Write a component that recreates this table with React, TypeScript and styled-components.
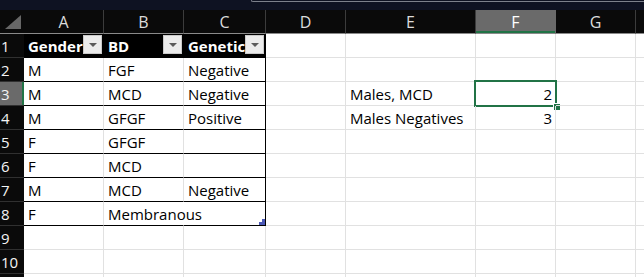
import styled, { createGlobalStyle } from "styled-components";

const GlobalStyle = createGlobalStyle`
  html, body {
    margin: 0;
    padding: 0;
    background: #ffffff;
    overflow: hidden;
  }
  body {
    font-family: "Open Sans", "Liberation Sans", sans-serif;
  }
`;

const GRID = "#e1e1e1";
const INK = "#000000";
const ACCENT = "#217346";

// last column and last row only peek in at the window edge, so no labels
const columns = ["A", "B", "C", "D", "E", "F", "G", ""];

// Table A1:C8
const tableHead = ["Gender", "BD", "Genetic"];
const tableRows = [
  ["M", "FGF", "Negative"],
  ["M", "MCD", "Negative"],
  ["M", "GFGF", "Positive"],
  ["F", "GFGF", ""],
  ["F", "MCD", ""],
  ["M", "MCD", "Negative"],
  ["F", "Membranous", ""],
];

// Loose values outside the table, keyed by row then column index
const extras: Record<number, Record<number, string>> = {
  3: { 4: "Males, MCD", 5: "2" },
  4: { 4: "Males Negatives", 5: "3" },
};

const activeRow = 3;
const activeCol = 5;
const visibleRows = 10;

function App() {
  const rows = Array.from({ length: visibleRows + 1 }, (_, i) => i + 1);

  const renderCell = (row: number, col: number) => {
    const key = `${row}-${col}`;

    if (row === 1 && col < 3) {
      return (
        <HeadCell key={key}>
          <HeadLabel>{tableHead[col]}</HeadLabel>
          <FilterButton>
            <FilterArrow />
          </FilterButton>
        </HeadCell>
      );
    }

    if (row >= 2 && row <= 8 && col < 3) {
      const text = tableRows[row - 2][col];
      const spills = row === 8 && col === 1;
      const right = col === 2 ? INK : spills ? "transparent" : GRID;
      return (
        <Cell key={key} $bb={INK} $br={right}>
          {text}
          {row === 8 && col === 2 && <ResizeHandle />}
        </Cell>
      );
    }

    const value = extras[row]?.[col] ?? "";
    const numeric = value !== "" && !isNaN(Number(value));
    return (
      <Cell key={key} $align={numeric ? "right" : "left"}>
        {value}
        {row === activeRow && col === activeCol && (
          <Selection>
            <FillHandle />
          </Selection>
        )}
      </Cell>
    );
  };

  return (
    <>
      <GlobalStyle />
      <Window>
        <TopStrip>
          <FormulaBox />
        </TopStrip>
        <Sheet>
          <Corner>
            <CornerMark />
          </Corner>
          {columns.map((c, i) => (
            <ColHeader key={`c${i}`} $active={i === activeCol}>
              {c}
            </ColHeader>
          ))}
          {rows.map((r) => [
            <RowHeader key={`h${r}`} $active={r === activeRow}>
              {r <= visibleRows ? r : ""}
            </RowHeader>,
            ...columns.map((_, c) => renderCell(r, c)),
          ])}
        </Sheet>
      </Window>
    </>
  );
}

const Window = styled.div`
  width: 644px;
  height: 277px;
  overflow: hidden;
  background: #ffffff;
`;

const TopStrip = styled.div`
  height: 10px;
  background: #0e1222;
  display: flex;
`;

const FormulaBox = styled.div`
  margin-left: 251px;
  flex: 1;
  height: 1px;
  border-left: 1px solid #7c808b;
  border-bottom: 1px solid #7c808b;
  border-bottom-left-radius: 3px;
`;

const Sheet = styled.div`
  display: grid;
  grid-template-columns: 24px 80px 80px 82px 80px 130px 80px 80px 80px;
  grid-auto-rows: 24px;
`;

const Corner = styled.div`
  position: relative;
  background: #0a0a0a;
  border-bottom: 1px solid #8a8a8a;
  box-sizing: border-box;
`;

const CornerMark = styled.span`
  position: absolute;
  right: 3px;
  bottom: 4px;
  width: 16px;
  height: 14px;
  background: #676767;
  clip-path: polygon(100% 0, 100% 100%, 0 100%);
`;

const ColHeader = styled.div<{ $active: boolean }>`
  box-sizing: border-box;
  background: ${(p) => (p.$active ? "#6a6a6a" : "#0a0a0a")};
  color: ${(p) => (p.$active ? "#ffffff" : "#dcdcdc")};
  border-right: 1px solid ${(p) => (p.$active ? "#6a6a6a" : "#3c3c3c")};
  border-bottom: 1px solid #8a8a8a;
  box-shadow: ${(p) => (p.$active ? `inset 0 -2px 0 ${ACCENT}` : "none")};
  font-size: 16px;
  line-height: 22px;
  padding-top: 1px;
  text-align: center;
`;

const RowHeader = styled.div<{ $active: boolean }>`
  box-sizing: border-box;
  background: ${(p) => (p.$active ? "#6a6a6a" : "#0a0a0a")};
  color: #f4f4f4;
  border-bottom: 1px solid #303030;
  box-shadow: ${(p) => (p.$active ? `inset -2px 0 0 ${ACCENT}` : "none")};
  font-size: 15px;
  line-height: 20px;
  padding: 2px 0 0 1px;
`;

const Cell = styled.div<{ $bb?: string; $br?: string; $align?: "left" | "right" }>`
  position: relative;
  box-sizing: border-box;
  border-right: 1px solid ${(p) => p.$br ?? GRID};
  border-bottom: 1px solid ${(p) => p.$bb ?? GRID};
  color: #000000;
  font-size: 15px;
  line-height: 20px;
  padding: 2px 3px 0 4px;
  white-space: nowrap;
  text-align: ${(p) => p.$align ?? "left"};
`;

const HeadCell = styled.div`
  box-sizing: border-box;
  display: flex;
  align-items: flex-start;
  background: #000000;
  border-right: 1px solid #000000;
  border-bottom: 1px solid #000000;
  color: #ffffff;
  font-size: 15px;
  font-weight: 700;
  line-height: 20px;
  padding: 1px 1px 0 4px;
  overflow: hidden;
`;

const HeadLabel = styled.span`
  flex: 1;
  min-width: 0;
  overflow: hidden;
  white-space: nowrap;
  padding-top: 1px;
`;

const FilterButton = styled.span`
  flex: none;
  width: 19px;
  height: 19px;
  box-sizing: border-box;
  background: #ebebeb;
  border: 1px solid #c9c9c9;
  display: flex;
  align-items: center;
  justify-content: center;
`;

const FilterArrow = styled.span`
  width: 0;
  height: 0;
  border-left: 4px solid transparent;
  border-right: 4px solid transparent;
  border-top: 4px solid #5a5a5a;
  margin-top: 1px;
`;

const ResizeHandle = styled.span`
  position: absolute;
  right: 0;
  bottom: 0;
  width: 6px;
  height: 6px;
  background: #4b58b6;
  clip-path: polygon(100% 0, 100% 100%, 0 100%, 0 50%, 50% 50%, 50% 0);
`;

const Selection = styled.span`
  position: absolute;
  top: -2px;
  left: -2px;
  right: -2px;
  bottom: -2px;
  border: 2px solid ${ACCENT};
  pointer-events: none;
`;

const FillHandle = styled.span`
  position: absolute;
  right: -5px;
  bottom: -5px;
  width: 6px;
  height: 6px;
  background: ${ACCENT};
  outline: 1px solid #ffffff;
`;

export default App;
